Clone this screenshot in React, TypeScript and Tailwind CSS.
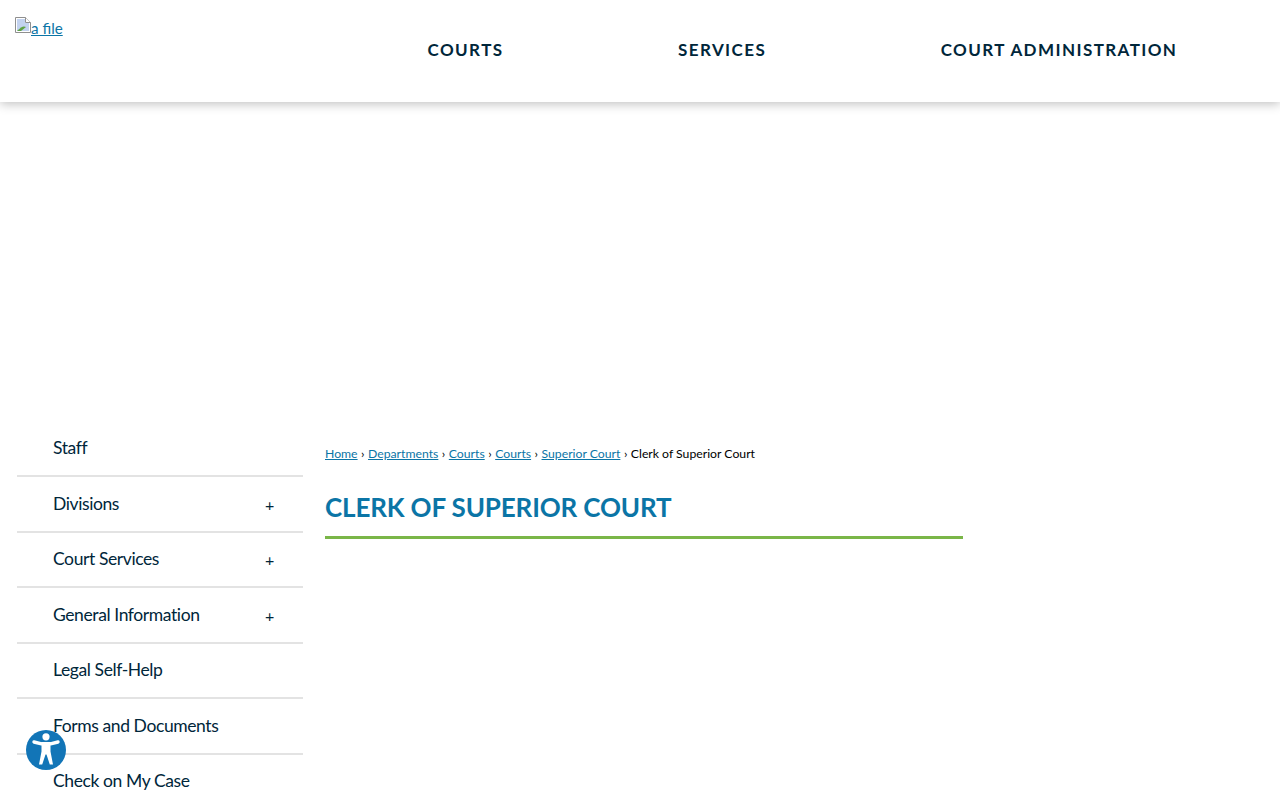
const NAV_ITEMS = ['COURTS', 'SERVICES', 'COURT ADMINISTRATION'];

const SIDE_ITEMS = [
  { label: 'Staff', expandable: false },
  { label: 'Divisions', expandable: true },
  { label: 'Court Services', expandable: true },
  { label: 'General Information', expandable: true },
  { label: 'Legal Self-Help', expandable: false },
  { label: 'Forms and Documents', expandable: false },
  { label: 'Check on My Case', expandable: false },
];

const CRUMBS = ['Home', 'Departments', 'Courts', 'Courts', 'Superior Court'];

const BrokenImage = () => (
  <svg width="16" height="16" viewBox="0 0 16 16" className="shrink-0">
    <path d="M0.5 0.5H10.5L15.5 5.5V15.5H0.5Z" fill="#fff" stroke="#8f8f8f" />
    <path d="M2 2H10V6H14V14H2Z" fill="#c3d3f0" />
    <path d="M2 14L6 10.5C8 9.2 10 9.5 11 10L6 14Z" fill="#5fa344" />
    <path d="M10.5 0.5V5.5H15.5" fill="#fff" stroke="#8f8f8f" />
  </svg>
);

const AccessibilityButton = () => (
  <button
    type="button"
    className="absolute left-[26px] top-[730px] flex h-10 w-10 items-center justify-center rounded-full bg-[#1275b7]"
  >
    <svg width="40" height="40" viewBox="0 0 40 40">
      <circle cx="20" cy="6.8" r="3.6" fill="#fff" />
      <path d="M8 12L15.5 13.8H24.5L32 12" fill="none" stroke="#fff" strokeWidth="3.4" strokeLinecap="round" strokeLinejoin="round" />
      <path d="M15.5 13H24.5V21.5L27 34.5H23.8L20.5 24.5H19.5L16.2 34.5H13L15.5 21.5Z" fill="#fff" />
    </svg>
  </button>
);

export default function App() {
  return (
    <div className="relative h-[800px] overflow-hidden bg-white font-['Lato',sans-serif]">
      <header className="flex h-[102px] items-start bg-white shadow-[0_2px_10px_rgba(0,0,0,0.25)]">
        <a href="#" className="ml-[15px] mt-[17px] flex w-[412.5px] items-start text-[15.2px] leading-[22px] text-[#0b75a6]">
          <BrokenImage />
          <span className="underline">a file</span>
        </a>
        <nav className="mt-[39px] flex gap-[174.5px]">
          {NAV_ITEMS.map((item) => (
            <a key={item} href="#" className="text-[17px] font-bold leading-[21px] tracking-[1.42px] text-[#00263a]">
              {item}
            </a>
          ))}
        </nav>
      </header>

      <main className="flex pl-[17px] pt-[319.5px]">
        <ul className="w-[286px] shrink-0">
          {SIDE_ITEMS.map((item) => (
            <li
              key={item.label}
              className="flex h-[55.5px] items-center justify-between border-b-2 border-[#e3e3e3] pb-[0.5px] pl-9 pr-[29px] text-[17.5px] leading-6 tracking-[-0.4px] text-[#00263a] last:border-b-0 last:pb-[3px]"
            >
              <span>{item.label}</span>
              {item.expandable ? <span className="mt-[2px] text-base leading-none">+</span> : null}
            </li>
          ))}
        </ul>

        <section className="ml-[22px] w-[638px] pt-[23.5px]">
          <div className="flex gap-[3.5px] text-[12.22px] leading-[18px] text-black">
            {CRUMBS.map((crumb, index) => (
              <span key={index} className="flex gap-[3.5px]">
                <a href="#" className="text-[#0b75a6] underline">
                  {crumb}
                </a>
                <span>›</span>
              </span>
            ))}
            <span>Clerk of Superior Court</span>
          </div>
          <h1 className="mt-[27px] border-b-[3px] border-[#7ab648] pb-[12px] text-[26px] font-bold leading-[34px] tracking-[-0.15px] text-[#0b75a6]">
            CLERK OF SUPERIOR COURT
          </h1>
        </section>
      </main>

      <AccessibilityButton />
    </div>
  );
}
